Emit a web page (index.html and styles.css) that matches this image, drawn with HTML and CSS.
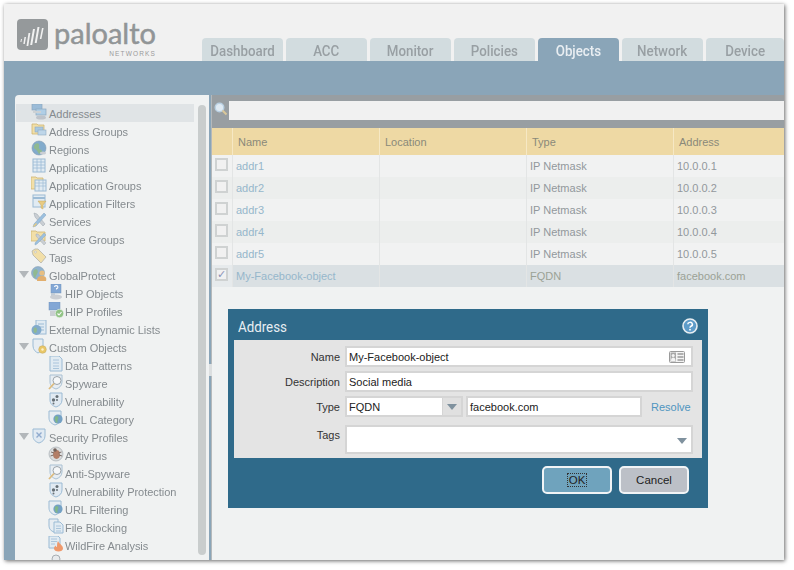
FILE: index.html
```html
<!DOCTYPE html>
<html lang="en">
<head>
<meta charset="utf-8">
<title>Objects - Addresses</title>
<link rel="stylesheet" href="styles.css">
</head>
<body>
<svg class="defs" width="0" height="0" aria-hidden="true">
  <symbol id="i-net" viewBox="0 0 16 16"><rect x="1" y="0" width="10" height="6" fill="#8fb6d6" stroke="#7f9fb8" stroke-width=".7"/><rect x="5" y="5" width="10" height="6" fill="#a8cbe6" stroke="#7f9fb8" stroke-width=".7"/><rect x="2" y="7" width="8" height="2" fill="#c9ced2"/><ellipse cx="10" cy="13.5" rx="5" ry="2" fill="#b9bec6"/></symbol>
  <symbol id="i-group" viewBox="0 0 16 16"><path d="M1 2h5l1 1h6v9H1z" fill="#f2dc9c" stroke="#c9ac5e" stroke-width=".8"/><rect x="4" y="5" width="8" height="5" fill="#9cc2de" stroke="#7f9fb8" stroke-width=".6"/><rect x="7" y="8" width="8" height="5" fill="#b5d2e8" stroke="#7f9fb8" stroke-width=".6"/></symbol>
  <symbol id="i-globe" viewBox="0 0 16 16"><circle cx="8" cy="8" r="7" fill="#6f9fc6" stroke="#6b8aa2" stroke-width=".6"/><path d="M4 4c3-2 5 0 4 3s4 2 3 5l-3 2c-2-3-2-4-4-5S3 6 4 4z" fill="#7fb07f"/><ellipse cx="12" cy="13" rx="3" ry="1.5" fill="#c3c8ce"/></symbol>
  <symbol id="i-table" viewBox="0 0 16 16"><rect x="2" y="1" width="12" height="13" fill="#dfeaf3" stroke="#8db2d0"/><path d="M2 4h12M2 7h12M2 10h12M6 1v13M10 1v13" stroke="#8db2d0" stroke-width=".8"/></symbol>
  <symbol id="i-appgroup" viewBox="0 0 16 16"><path d="M0 1h5l1 1h6v11H0z" fill="#f2dc9c" stroke="#c9ac5e" stroke-width=".8"/><rect x="4" y="4" width="11" height="11" fill="#dfeaf3" stroke="#8db2d0"/><path d="M4 7h11M4 10h11M8 4v11M12 4v11" stroke="#8db2d0" stroke-width=".7"/></symbol>
  <symbol id="i-filter" viewBox="0 0 16 16"><rect x="2" y="1" width="12" height="12" fill="#dfeaf3" stroke="#8db2d0"/><path d="M2 4h12" stroke="#8db2d0" stroke-width="2"/><path d="M7 7h8l-3 4v4l-2-1v-3z" fill="#e8c56e" stroke="#b99a4a" stroke-width=".5"/></symbol>
  <symbol id="i-tools" viewBox="0 0 16 16"><path d="M3 1l3 1 8 10-2 2L4 5z" fill="#c3c9cf" stroke="#8b969e" stroke-width=".5"/><path d="M13 1l2 2-10 11-3 1 1-3z" fill="#8db8dc" stroke="#6d93b3" stroke-width=".5"/><path d="M2 14l3-3 1 1-3 3z" fill="#e8c56e"/></symbol>
  <symbol id="i-svcgroup" viewBox="0 0 16 16"><path d="M0 1h5l1 1h8v9H0z" fill="#f2dc9c" stroke="#c9ac5e" stroke-width=".8"/><path d="M5 4l2 0 8 9-2 2-8-9z" fill="#c3c9cf" stroke="#8b969e" stroke-width=".4"/><path d="M13 3l2 2-9 9-2 1 0-2z" fill="#8db8dc" stroke="#6d93b3" stroke-width=".4"/></symbol>
  <symbol id="i-tag" viewBox="0 0 16 16"><path d="M1 3l3-2h3l8 8-5 6-8-8z" fill="#f2dc9c" stroke="#a9a9a0" stroke-width=".8"/><circle cx="4.5" cy="4" r="1" fill="#f0f2f2" stroke="#a9a9a0" stroke-width=".5"/></symbol>
  <symbol id="i-gp" viewBox="0 0 16 16"><circle cx="7" cy="7" r="6.5" fill="#7fa8c8" stroke="#6b8aa2" stroke-width=".5"/><path d="M3 4c3-2 5 1 3 4s-1 4-2 4-3-6-1-8z" fill="#7fb07f"/><circle cx="11" cy="7" r="2.6" fill="#e4b56e"/><path d="M6 15c0-4 2-5 5-5s5 1 4 5z" fill="#e0a458"/></symbol>
  <symbol id="i-hipo" viewBox="0 0 16 16"><rect x="3" y="0" width="10" height="9" fill="#6f9bd0" stroke="#5b83b3" stroke-width=".5"/><path d="M6.500 3a1.700 1.500 0 1 1 2 1.600v1" fill="none" stroke="#fff" stroke-width="1.100"/><rect x="3" y="9" width="4" height="3" fill="#b9c6d2"/><ellipse cx="8" cy="13" rx="6" ry="2.500" fill="#c3c8ce"/></symbol>
  <symbol id="i-hipp" viewBox="0 0 16 16"><rect x="1" y="0" width="11" height="8" fill="#6f9bd0" stroke="#5b83b3" stroke-width=".5"/><rect x="2" y="9" width="7" height="5" fill="#c3c8ce"/><circle cx="11.500" cy="11.500" r="4.200" fill="#7fbb72" stroke="#f0f2f2" stroke-width=".6"/><path d="M9.500 11.500l1.500 1.500 2.500-3" fill="none" stroke="#fff" stroke-width="1.100"/></symbol>
  <symbol id="i-edl" viewBox="0 0 16 16"><rect x="5" y="0" width="10" height="14" fill="#dfeaf3" stroke="#8db2d0"/><path d="M7 4h6M7 7h6M7 10h6" stroke="#8db2d0"/><circle cx="5.500" cy="10" r="5" fill="#6f9fc6"/><path d="M3 8c2-1 3 0 3 2s-1 3-2 3-2-3-1-5z" fill="#7fb07f"/></symbol>
  <symbol id="i-custom" viewBox="0 0 16 16"><path d="M2 1h10v7c0 4-3 6-5 7-2-1-5-3-5-7z" fill="#e6edf3" stroke="#8db2d0"/><circle cx="11.500" cy="11.500" r="3.800" fill="#e8c04f" stroke="#b99a4a" stroke-width=".5"/><circle cx="11.500" cy="11.500" r="1.200" fill="#fff1c4"/></symbol>
  <symbol id="i-doc" viewBox="0 0 16 16"><path d="M2 0h9l3 3v12H2z" fill="#dfeaf3" stroke="#8db2d0"/><path d="M5 4h6M5 7h6M5 10h6M5 12.500h6" stroke="#8db2d0" stroke-width=".8"/></symbol>
  <symbol id="i-spy" viewBox="0 0 16 16"><path d="M2 1h12v7c0 4-3 6-6 7-3-1-6-3-6-7z" fill="#e6edf3" stroke="#9cb8ce"/><circle cx="9" cy="6.500" r="4" fill="#f6f8fa" stroke="#8b969e"/><path d="M6 9.500L1 15" stroke="#d9b26a" stroke-width="1.800"/></symbol>
  <symbol id="i-vuln" viewBox="0 0 16 16"><path d="M2 1h12v7c0 4-3 6-6 7-3-1-6-3-6-7z" fill="#dfe9f2" stroke="#8db2d0"/><circle cx="5.500" cy="8" r="1.700" fill="#4f5a62"/><circle cx="9" cy="4.500" r="1.500" fill="#4f5a62"/><circle cx="5.500" cy="11.500" r="1" fill="#4f5a62"/><circle cx="9" cy="8" r="1" fill="#4f5a62"/></symbol>
  <symbol id="i-url" viewBox="0 0 16 16"><path d="M1 1h12v7c0 4-3 6-6 7-3-1-6-3-6-7z" fill="#e6edf3" stroke="#8db2d0"/><circle cx="10" cy="9" r="4.600" fill="#5e93bd"/><path d="M8 6c2 0 3 1 2 3s0 3-1 4c-2-1-3-5-1-7z" fill="#6fae76"/></symbol>
  <symbol id="i-sec" viewBox="0 0 16 16"><path d="M2 1h12v7c0 4-3 6-6 7-3-1-6-3-6-7z" fill="#dfe9f2" stroke="#8db2d0"/><path d="M5.500 4.500l5 5M10.500 4.500l-5 5" stroke="#7f9fc8" stroke-width="1.400"/></symbol>
  <symbol id="i-av" viewBox="0 0 16 16"><circle cx="8" cy="8" r="7" fill="#d8dadb" stroke="#8b969e" stroke-width=".6"/><ellipse cx="8.500" cy="8.500" rx="3.400" ry="4.400" fill="#a8694e"/><circle cx="7" cy="4" r="1.800" fill="#5c4a42"/><path d="M3 6l3 1M2.500 10l3-1M13.500 6l-3 1M14 10l-3-1" stroke="#5c4a42" stroke-width=".9"/></symbol>
  <symbol id="i-file" viewBox="0 0 16 16"><path d="M1 1h9v7c0 3-3 5-4 6-3-1-5-3-5-6z" fill="#e6edf3" stroke="#8db2d0"/><path d="M6 4h6l3 3v8H6z" fill="#dfeaf3" stroke="#8db2d0"/><path d="M8 8h5M8 10.500h5M8 13h5" stroke="#8db2d0" stroke-width=".8"/></symbol>
  <symbol id="i-fire" viewBox="0 0 16 16"><path d="M1 0h9l2 2v10H1z" fill="#dfeaf3" stroke="#8db2d0"/><path d="M3 3h6M3 5.500h6M3 8h4" stroke="#8db2d0" stroke-width=".8"/><path d="M10 5c1 3 5 4 5 7.500 0 2-2 3-4.500 3S6 14.500 6 12.500c0-1.500 1-2 1.500-3 .5 1 1 1.500 1.500 1.500 0-2 0-4 1-6z" fill="#ee8a55"/></symbol>
  <symbol id="i-data" viewBox="0 0 16 16"><circle cx="8" cy="5" r="4" fill="#e6e9eb" stroke="#9aa2a8"/><path d="M3 15c0-4 2-6 5-6s5 2 5 6z" fill="#d5d9dc"/></symbol>
</svg>
<div class="window">
  <header class="top">
    <div class="logo">
      <svg class="logo-mark" viewBox="0 0 31 31" aria-hidden="true">
        <rect width="31" height="31" rx="4" fill="#95999b"/>
        <path d="M4 20l1 0-.6 3-1 0zM7.500 18l1.500 0-1.200 7-1.500 0zM11.500 14l1.800 0-2 13-1.800 0zM16 10l2 0-2.800 16-2 0zM20.500 8l2 0-2.800 16-2 0zM25 9l1.600 0-2.200 11-1.600 0z" fill="#f1f1f1"/>
      </svg>
      <div class="logo-words">
        <span class="logo-name">paloalto</span>
        <span class="logo-sub">NETWORKS</span>
      </div>
    </div>
    <nav class="tabs">
      <span class="tab"><b>Dashboard</b></span>
      <span class="tab"><b>ACC</b></span>
      <span class="tab"><b>Monitor</b></span>
      <span class="tab"><b>Policies</b></span>
      <span class="tab tab-on"><b>Objects</b></span>
      <span class="tab"><b>Network</b></span>
      <span class="tab tab-last"><b>Device</b></span>
    </nav>
  </header>
  <div class="band">
    <aside class="side">
      <ul class="tree">
        <li class="node node-on"><svg class="ic"><use href="#i-net"/></svg>Addresses</li>
        <li class="node"><svg class="ic"><use href="#i-group"/></svg>Address Groups</li>
        <li class="node"><svg class="ic"><use href="#i-globe"/></svg>Regions</li>
        <li class="node"><svg class="ic"><use href="#i-table"/></svg>Applications</li>
        <li class="node"><svg class="ic"><use href="#i-appgroup"/></svg>Application Groups</li>
        <li class="node"><svg class="ic"><use href="#i-filter"/></svg>Application Filters</li>
        <li class="node"><svg class="ic"><use href="#i-tools"/></svg>Services</li>
        <li class="node"><svg class="ic"><use href="#i-svcgroup"/></svg>Service Groups</li>
        <li class="node"><svg class="ic"><use href="#i-tag"/></svg>Tags</li>
        <li class="node node-open"><svg class="ic"><use href="#i-gp"/></svg>GlobalProtect</li>
        <li class="node sub"><svg class="ic"><use href="#i-hipo"/></svg>HIP Objects</li>
        <li class="node sub"><svg class="ic"><use href="#i-hipp"/></svg>HIP Profiles</li>
        <li class="node"><svg class="ic"><use href="#i-edl"/></svg>External Dynamic Lists</li>
        <li class="node node-open"><svg class="ic"><use href="#i-custom"/></svg>Custom Objects</li>
        <li class="node sub"><svg class="ic"><use href="#i-doc"/></svg>Data Patterns</li>
        <li class="node sub"><svg class="ic"><use href="#i-spy"/></svg>Spyware</li>
        <li class="node sub"><svg class="ic"><use href="#i-vuln"/></svg>Vulnerability</li>
        <li class="node sub"><svg class="ic"><use href="#i-url"/></svg>URL Category</li>
        <li class="node node-open"><svg class="ic"><use href="#i-sec"/></svg>Security Profiles</li>
        <li class="node sub"><svg class="ic"><use href="#i-av"/></svg>Antivirus</li>
        <li class="node sub"><svg class="ic"><use href="#i-spy"/></svg>Anti-Spyware</li>
        <li class="node sub"><svg class="ic"><use href="#i-vuln"/></svg>Vulnerability Protection</li>
        <li class="node sub"><svg class="ic"><use href="#i-url"/></svg>URL Filtering</li>
        <li class="node sub"><svg class="ic"><use href="#i-file"/></svg>File Blocking</li>
        <li class="node sub"><svg class="ic"><use href="#i-fire"/></svg>WildFire Analysis</li>
        <li class="node sub"><svg class="ic"><use href="#i-data"/></svg>Data Filtering</li>
      </ul>
      <div class="scroll"></div>
    </aside>
    <main class="main">
      <div class="search">
        <svg class="glass" viewBox="0 0 14 14" aria-hidden="true"><circle cx="5.500" cy="5.500" r="4.300" fill="#dfeaf3" stroke="#b9d0e2" stroke-width="1.400"/><path d="M8.500 8.500l4 4" stroke="#d9c79a" stroke-width="2"/></svg>
        <div class="search-box"></div>
      </div>
      <div class="grid-head">
        <span class="c0"></span><span class="c1">Name</span><span class="c2">Location</span><span class="c3">Type</span><span class="c4">Address</span>
      </div>
      <div class="row"><span class="c0"><i class="check"></i></span><span class="c1 link">addr1</span><span class="c2"></span><span class="c3">IP Netmask</span><span class="c4">10.0.0.1</span></div>
      <div class="row"><span class="c0"><i class="check"></i></span><span class="c1 link">addr2</span><span class="c2"></span><span class="c3">IP Netmask</span><span class="c4">10.0.0.2</span></div>
      <div class="row"><span class="c0"><i class="check"></i></span><span class="c1 link">addr3</span><span class="c2"></span><span class="c3">IP Netmask</span><span class="c4">10.0.0.3</span></div>
      <div class="row"><span class="c0"><i class="check"></i></span><span class="c1 link">addr4</span><span class="c2"></span><span class="c3">IP Netmask</span><span class="c4">10.0.0.4</span></div>
      <div class="row"><span class="c0"><i class="check"></i></span><span class="c1 link">addr5</span><span class="c2"></span><span class="c3">IP Netmask</span><span class="c4">10.0.0.5</span></div>
      <div class="row row-on"><span class="c0"><i class="check">&#10003;</i></span><span class="c1 link">My-Facebook-object</span><span class="c2"></span><span class="c3">FQDN</span><span class="c4">facebook.com</span></div>
    </main>
    <div class="grip"></div>
  </div>
  <section class="dialog">
    <div class="dlg-title">
      <span class="dlg-name">Address</span>
      <svg class="help" viewBox="0 0 16 16" aria-hidden="true"><circle cx="8" cy="8" r="7" fill="#5e9cc9" stroke="#e8eef2" stroke-width="1.600"/><path d="M5.800 6.300a2.300 2 0 1 1 3.200 1.900c-.7.400-1 .8-1 1.500" fill="none" stroke="#fff" stroke-width="1.500"/><circle cx="8" cy="11.700" r=".9" fill="#fff"/></svg>
    </div>
    <div class="dlg-body">
      <div class="field"><label>Name</label><div class="input wide">My-Facebook-object
        <svg class="card" viewBox="0 0 16 12" aria-hidden="true"><rect x=".5" y=".5" width="15" height="11" rx="1" fill="#f4f4f4" stroke="#9a9a9a"/><rect x="1.500" y="1.500" width="5.500" height="9" fill="#a9a9a9"/><circle cx="4.200" cy="4.500" r="1.500" fill="#f4f4f4"/><path d="M2 10c0-3 1-3.500 2.200-3.500S6.500 7 6.500 10z" fill="#f4f4f4"/><path d="M8.500 3h6M8.500 6h6M8.500 9h6" stroke="#9a9a9a" stroke-width="1.300"/></svg>
      </div></div>
      <div class="field"><label>Description</label><div class="input wide">Social media</div></div>
      <div class="field">
        <label>Type</label>
        <div class="select"><span class="select-val">FQDN</span><span class="select-btn"><i class="caret"></i></span></div>
        <div class="input fqdn">facebook.com</div>
        <a class="resolve">Resolve</a>
      </div>
      <div class="field field-tags"><label>Tags</label><div class="input wide tall"><i class="caret caret-tags"></i></div></div>
    </div>
    <div class="dlg-foot">
      <button class="btn btn-ok"><span class="focus">OK</span></button>
      <button class="btn">Cancel</button>
    </div>
  </section>
</div>
</body>
</html>
```
FILE: styles.css
```css
* { box-sizing: border-box; }
html, body { margin: 0; padding: 0; }
body { width: 794px; height: 570px; background: #fff; overflow: hidden; font-family: "Liberation Sans", sans-serif; }
.defs { position: absolute; }
.window { position: relative; width: 780px; height: 556px; margin: 4px 0 0 4px; background: #8aa5b8; overflow: hidden; box-shadow: 1px 1px 4px rgba(0,0,0,.6); filter: blur(.35px); }

.top { height: 57px; background: #f1f1f1; display: flex; justify-content: space-between; align-items: flex-end; }
.logo { display: flex; align-self: flex-start; gap: 6px; padding: 15px 0 0 13px; }
.logo-mark { width: 31px; height: 31px; }
.logo-words { display: flex; flex-direction: column; align-items: flex-end; margin-top: -3px; }
.logo-name { font: 29px/33px Lato, sans-serif; color: #919597; -webkit-text-stroke: .5px #919597; }
.logo-sub { font: 6.500px/7px "Liberation Sans", sans-serif; color: #9a9a9a; letter-spacing: 1.150px; margin-top: 1px; }
.tabs { display: flex; gap: 3px; }
.tab { width: 81px; height: 23px; border-radius: 4px 4px 0 0; background: #d2dcdf; color: #989fa3; font: 500 15.500px/26px Roboto, sans-serif; text-align: center; }
.tab b { display: inline-block; font-weight: 500; transform: scaleX(.86); }
.tab-on { background: #8aa5b8; color: #e9eef2; }
.tab-last { width: 78px; }

.band { height: 499px; padding: 34px 0 0 11px; display: flex; position: relative; }
.side { width: 194px; height: 465px; background: #f0f2f2; border-radius: 4px 0 0 0; padding-top: 9px; position: relative; overflow: hidden; }
.tree { list-style: none; margin: 0; padding: 0 0 0 1px; width: 179px; }
.node { height: 18px; display: flex; align-items: center; padding: 1px 0 0 15px; font-size: 11px; letter-spacing: -.03px; color: #858b8f; white-space: nowrap; position: relative; }
.node-on { background: #e0e4e6; }
.sub { padding-left: 32px; }
.ic { width: 16px; height: 16px; margin-right: 2px; flex: none; position: relative; top: -2px; opacity: .85; }
.sub .ic { margin-right: 1px; }
.node-open::before { content: ""; position: absolute; left: 3px; top: 5px; border: 5px solid transparent; border-top: 7px solid #b2b7ba; border-bottom: 0; }
.scroll { position: absolute; left: 183px; top: 10px; width: 8px; height: 450px; border-radius: 4px; background: #c9cdcd; }

.main { width: 573px; height: 465px; margin-left: 2px; background: #f0f2f2; border-left: 1px solid #b5b9bb; }
.search { height: 33px; background: #989ea2; padding: 6px 0 8px 17px; position: relative; }
.glass { position: absolute; left: 2px; top: 7px; width: 14px; height: 14px; }
.search-box { height: 19px; background: #f1f1f1; }
.grid-head, .row { display: flex; }
.grid-head { height: 27px; background: #eed9a4; color: #8a897a; font-size: 11px; line-height: 28px; }
.grid-head span { border-left: 1px solid #f6e8c4; padding-left: 5px; }
.grid-head .c0 { border-left: 0; }
.c0 { width: 20px; flex: none; }
.c1, .c2, .c3 { width: 147px; flex: none; }
.c4 { flex: 1; }
.row { height: 22px; line-height: 22px; font-size: 11px; color: #92989c; background: #f1f2f2; }
.row span { border-left: 1px solid #e3e5e5; padding-left: 3px; }
.row .c0 { border-left: 0; padding: 3px 0 0 3px; }
.row .link { color: #96b7cb; }
.row:nth-of-type(even) { background: #eceeed; }
.row-on:nth-of-type(n) { background: #dae0e3; color: #9aa296; }
.row-on .c0 { background: #e6eaec; }
.check { display: block; width: 13px; height: 13px; background: #f1f1f1; border: 2px solid #cfd2d2; font: 11px/9px "DejaVu Sans", sans-serif; color: #8b93b8; text-align: center; }
.grip { position: absolute; left: 205px; top: 303px; width: 3px; height: 12px; background: #dcdfe0; }

.dialog { position: absolute; left: 224px; top: 305px; width: 480px; height: 199px; background: #2f6a8a; padding: 0 6px; display: flex; flex-direction: column; }
.dlg-title { height: 31px; display: flex; justify-content: space-between; align-items: center; color: #e8eef2; font: 15.500px Roboto, sans-serif; padding: 4px 4px 0 4px; }
.dlg-name { display: inline-block; transform: scaleX(.86); transform-origin: left center; }
.help { width: 16px; height: 16px; margin: -2px 0 0; }
.dlg-body { height: 118px; background: #e4e4e4; padding: 6px 0 0 0; display: flex; flex-direction: column; gap: 4px; font-size: 11px; color: #333; }
.field { display: flex; height: 21px; align-items: center; }
.field-tags { height: 29px; margin-top: 4px; align-items: flex-start; }
.field label { width: 106px; text-align: right; margin-right: 5px; flex: none; color: #333; }
.field-tags label { margin-top: 4px; }
.input { height: 21px; background: #fff; border: 2px solid #d5d5d5; padding: 0 2px; line-height: 18px; color: #222; position: relative; }
.wide { width: 348px; }
.tall { height: 29px; }
.card { position: absolute; right: 6px; top: 3px; width: 16px; height: 12px; }
.select { display: flex; width: 118px; height: 21px; border: 2px solid #d5d5d5; background: #fff; line-height: 18px; }
.select-val { flex: 1; padding-left: 2px; color: #222; }
.select-btn { width: 19px; background: #e0e0e0; border-left: 1px solid #d5d5d5; display: flex; align-items: center; justify-content: center; }
.caret { display: block; border: 5px solid transparent; border-top: 6px solid #7f919e; border-bottom: 0; }
.fqdn { width: 176px; margin-left: 3px; }
.caret-tags { position: absolute; right: 4px; top: 11px; border-width: 5.500px; border-bottom: 0; border-top-width: 6px; }
.resolve { margin-left: 9px; color: #4f95c0; }
.dlg-foot { flex: 1; display: flex; justify-content: flex-end; gap: 7px; padding: 8px 13px 0 0; align-items: flex-start; }
.btn { width: 70px; height: 28px; border: 2px solid #f1f4f6; border-radius: 5px; background: #bcc0c7; color: #222; font: 11.500px "Liberation Sans", sans-serif; padding: 0; }
.btn-ok { background: #6fa3bd; }
.focus { outline: 1px dotted #333; padding: 0 1px; }
```
